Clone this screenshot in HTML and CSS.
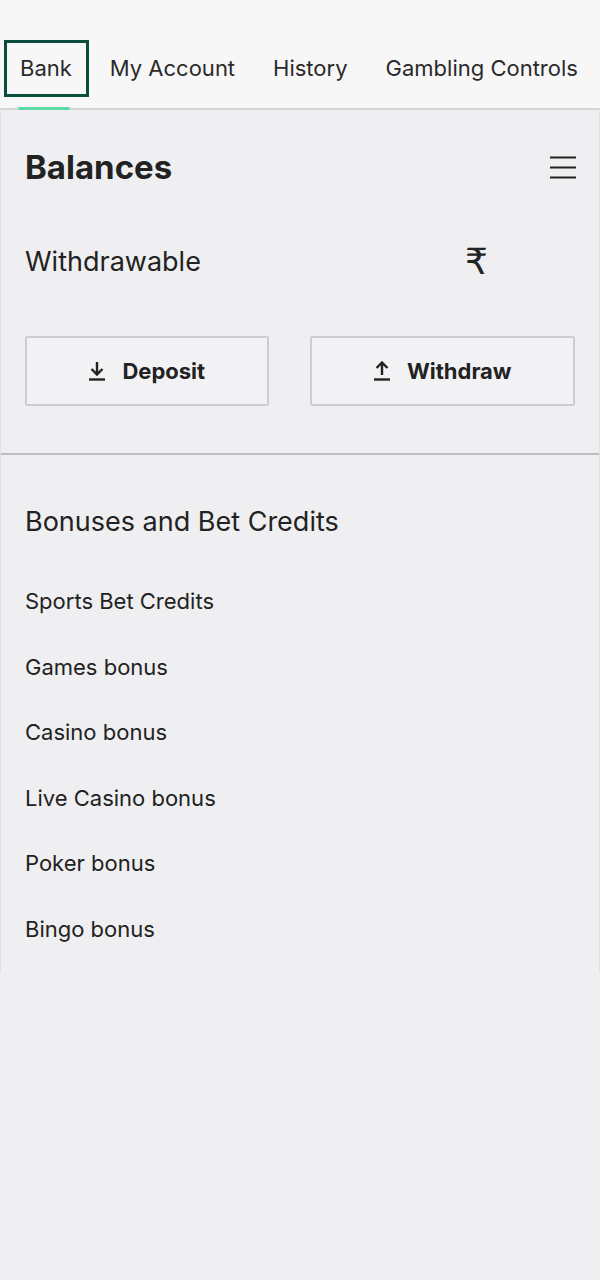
FILE: index.html
```html
<!DOCTYPE html>
<html lang="en">
<head>
    <meta charset="UTF-8">
    <meta name="viewport" content="width=device-width, initial-scale=1.0">
    <title>Bank</title>
    <link rel="stylesheet" href="styles.css">
</head>
<body>

    <!-- Tabs -->
    <nav class="tabs">
        <a class="tab active" href="#">Bank</a>
        <a class="tab" href="#">My Account</a>
        <a class="tab" href="#">History</a>
        <a class="tab" href="#">Gambling Controls</a>
    </nav>

    <main class="panel">
        <!-- Balances -->
        <section class="balances">
            <div class="balances-head">
                <h2>Balances</h2>
                <button class="menu-btn" aria-label="Menu">
                    <svg width="28" height="24" viewBox="0 0 28 24">
                        <path d="M1 2.5h26M1 12.5h26M1 22.5h26" stroke="#222" stroke-width="2.2"/>
                    </svg>
                </button>
            </div>
            <div class="balance-row">
                <span class="balance-label">Withdrawable</span>
                <span class="balance-value">₹</span>
            </div>
            <div class="actions">
                <button class="action-btn">
                    <svg width="18" height="20" viewBox="0 0 18 20">
                        <path d="M9 1v12M3.5 8l5.5 5.5L14.5 8" fill="none" stroke="#222" stroke-width="2.4"/>
                        <path d="M1 18.5h16" stroke="#222" stroke-width="2.4"/>
                    </svg>
                    Deposit
                </button>
                <button class="action-btn">
                    <svg width="18" height="20" viewBox="0 0 18 20">
                        <path d="M9 14V2M3.5 7L9 1.5 14.5 7" fill="none" stroke="#222" stroke-width="2.4"/>
                        <path d="M1 18.5h16" stroke="#222" stroke-width="2.4"/>
                    </svg>
                    Withdraw
                </button>
            </div>
        </section>

        <!-- Bonuses -->
        <section class="bonuses">
            <h3>Bonuses and Bet Credits</h3>
            <ul class="bonus-list">
                <li>Sports Bet Credits</li>
                <li>Games bonus</li>
                <li>Casino bonus</li>
                <li>Live Casino bonus</li>
                <li>Poker bonus</li>
                <li>Bingo bonus</li>
            </ul>
        </section>
    </main>

</body>
</html>
```

FILE: styles.css
```css
body {
    font-family: Inter, "Liberation Sans", Arial, sans-serif;
    background-color: #efeff1;
    color: #222;
    margin: 0;
    padding: 0;
}
.tabs {
    display: flex;
    align-items: flex-end;
    gap: 38px;
    height: 110px;
    box-sizing: border-box;
    background-color: #f7f7f8;
    border-bottom: 2px solid #d6d6d8;
    padding: 0 0 11px 4px;
}
.tab {
    position: relative;
    font-size: 22px;
    color: #2a2a2a;
    text-decoration: none;
    line-height: 24px;
    padding-bottom: 17px;
    white-space: nowrap;
}
.tab.active {
    border: 3px solid #0b4d3c;
    padding: 13px 14px 14px 13px;
    margin-right: -17px;
}
.tab.active::after {
    content: "";
    position: absolute;
    left: 11px;
    width: 52px;
    bottom: -16px;
    height: 3px;
    border-radius: 2px;
    background-color: #5fd9a8;
}
.panel {
    border-left: 1px solid #e2e2e4;
    border-right: 1px solid #e2e2e4;
    padding-bottom: 30px;
}
.balances {
    padding: 0 24px 47px;
    border-bottom: 2px solid #bdbdc0;
}
.balances-head {
    display: flex;
    justify-content: space-between;
    align-items: center;
    padding-top: 37px;
}
.balances-head h2 {
    margin: 0;
    font-size: 33px;
    font-weight: bold;
    line-height: 40px;
}
.menu-btn {
    background: none;
    border: none;
    padding: 0;
    margin-right: -2px;
    display: flex;
}
.balance-row {
    display: flex;
    align-items: center;
    margin-top: 54px;
    height: 40px;
}
.balance-label {
    font-size: 27px;
    width: 440px;
}
.balance-value {
    font-size: 36px;
    font-family: "DejaVu Sans", sans-serif;
}
.actions {
    display: flex;
    gap: 41px;
    margin-top: 55px;
}
.action-btn {
    flex: 1 1 auto;
    height: 70px;
    display: flex;
    align-items: center;
    justify-content: center;
    gap: 16px;
    background-color: #f2f2f4;
    border: 2px solid #cdcdd0;
    border-radius: 2px;
    font-family: inherit;
    font-size: 22px;
    font-weight: bold;
    color: #222;
}
.bonuses {
    padding: 50px 24px 0;
}
.bonuses h3 {
    margin: 0;
    font-size: 27px;
    font-weight: normal;
    line-height: 34px;
}
.bonus-list {
    list-style: none;
    margin: 49px 0 0;
    padding: 0;
}
.bonus-list li {
    font-size: 22px;
    line-height: 26px;
    margin-top: 39.5px;
}
.bonus-list li:first-child {
    margin-top: 0;
}
```
